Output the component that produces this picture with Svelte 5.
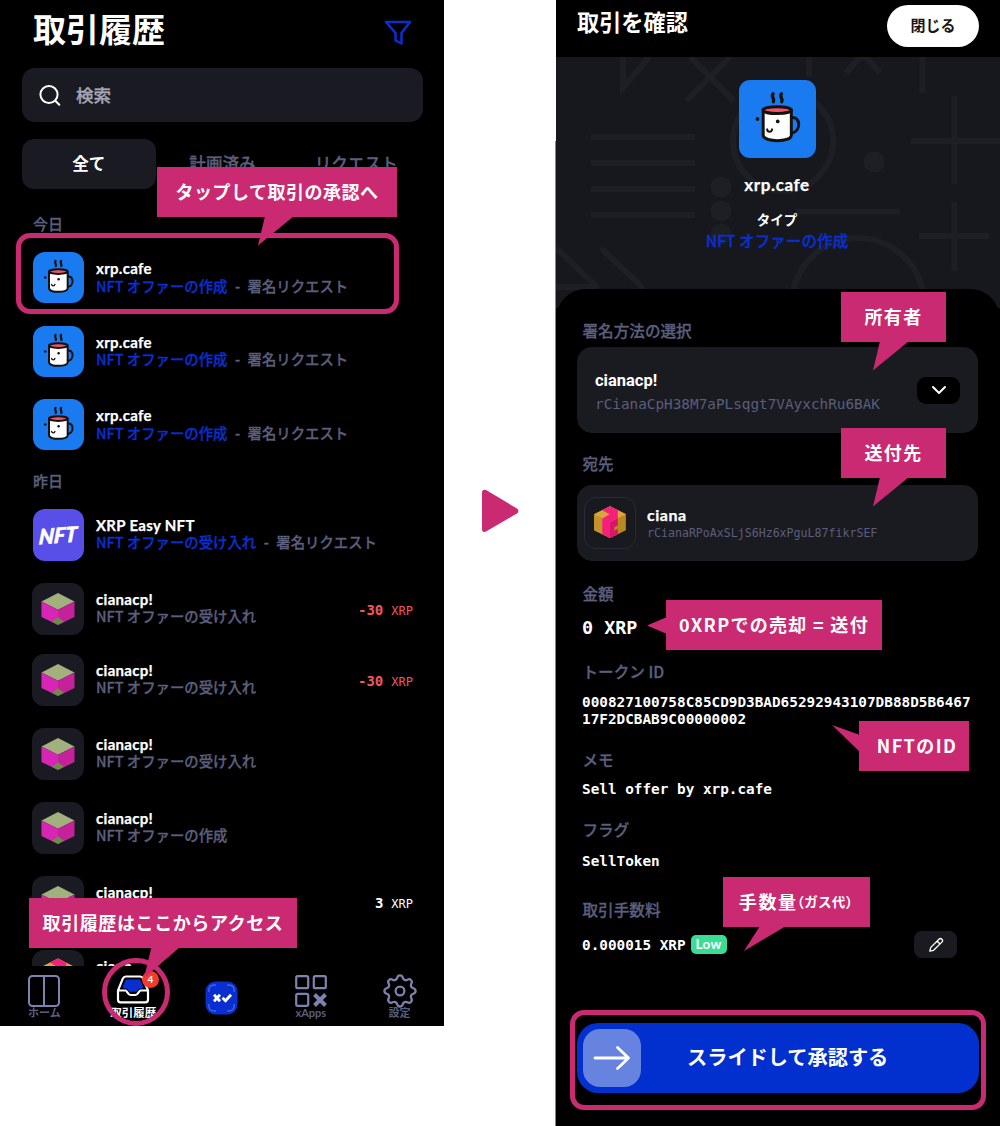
<script>
  const today = [
    { kind: 'cafe', name: 'xrp.cafe', action: 'NFT オファーの作成', request: true },
    { kind: 'cafe', name: 'xrp.cafe', action: 'NFT オファーの作成', request: true },
    { kind: 'cafe', name: 'xrp.cafe', action: 'NFT オファーの作成', request: true }
  ];
  const yesterday = [
    { kind: 'nft', name: 'XRP Easy NFT', action: 'NFT オファーの受け入れ', request: true },
    { kind: 'cube', name: 'cianacp!', action: 'NFT オファーの受け入れ', amount: '-30', tight: true },
    { kind: 'cube', name: 'cianacp!', action: 'NFT オファーの受け入れ', amount: '-30' },
    { kind: 'cube', name: 'cianacp!', action: 'NFT オファーの受け入れ' },
    { kind: 'cube', name: 'cianacp!', action: 'NFT オファーの作成' },
    { kind: 'cube', name: 'cianacp!', amount: '3' },
    { kind: 'gold', name: 'ciana' }
  ];
</script>

{#snippet mug()}
  <svg class="fill" viewBox="0 0 78 78">
    <g fill="none" stroke="#15110f" stroke-width="3" stroke-linecap="round">
      <path d="M34.500 13.500c-2.600 3 2 4.500 .3 8M43 13.500c-2.600 3 2 4.500 .3 8" stroke-width="3.400" />
      <path d="M53 37.500c9.500-1.500 10.500 14 0 16" />
      <path d="M24.500 30v26c2 6.600 27 6.600 28.500 0V30z" fill="#fff" />
      <ellipse cx="38.700" cy="30" rx="14.200" ry="3.500" fill="#f0566b" />
      <path d="M28.500 49.500c.3 3.200 4.500 3.200 5 0" stroke-width="2" />
    </g>
    <circle cx="18.700" cy="39" r="1.900" fill="#15110f" />
    <circle cx="39.200" cy="41.500" r="1.900" fill="#15110f" />
  </svg>
{/snippet}

{#snippet cube()}
  <svg class="fill" viewBox="0 0 52 52">
    <path d="M26 10 42.500 18.500 26 26.800 9.500 18.500z" fill="#a1b07c" />
    <path d="M9.500 18.500 26 26.800V42L9.500 34z" fill="#d726b5" />
    <path d="M42.500 18.500 26 26.800V42l16.500-8z" fill="#c5219a" />
    <path d="M26 34.200 32 38.700 26 42 20 38.700z" fill="#71894b" />
  </svg>
{/snippet}

{#snippet gold()}
  <svg class="fill" viewBox="0 0 52 52">
    <path d="M26 8.500 42.500 17V33.500L26 41.500 9.500 33.500V17z" fill="#b88920" />
    <path d="M9.500 17 26 25v16.500L9.500 33.500z" fill="#c6922a" />
    <path d="M26 8.500 42.500 17 26 25 9.500 17z" fill="#dba53c" />
    <path d="M26 8.500 34.200 12.700 42 17 34.500 20.800 26 25v16.500l-8-4V21.200l7.500-4.200-7.500-4.300z" fill="#f6207c" />
    <path d="M34.500 12.900 42.500 17 34.300 21l-.3-4z" fill="#dba53c" />
    <path d="M26 25 34.200 21v7.500l-3.700 2v3.300l3.700-1.600v5.400L26 41.500z" fill="#d91668" />
  </svg>
{/snippet}

{#snippet row(item)}
  <div class="row" class:tight={item.tight}>
    <div class="avatar {item.kind}">
      {#if item.kind === 'cafe'}{@render mug()}
      {:else if item.kind === 'cube'}{@render cube()}
      {:else if item.kind === 'gold'}{@render gold()}
      {:else}<span class="brush">NFT</span>{/if}
    </div>
    <div class="info">
      <div class="name">{item.name}</div>
      {#if item.action}
        <div class="sub"><span class:blue={item.request}>{item.action}</span>{#if item.request}<i>-</i><span>署名リクエスト</span>{/if}</div>
      {/if}
    </div>
    {#if item.amount}
      <div class="amount" class:red={item.amount !== '3'}><b>{item.amount}</b><span>XRP</span></div>
    {/if}
  </div>
{/snippet}

<main>
  <section class="phone history">
    <header class="head">
      <h1>取引履歴</h1>
      <svg class="funnel" viewBox="0 0 28 26"><path d="M2 2h24l-8.500 11v10.500l-6-3V13z" fill="none" stroke="#0a2fd0" stroke-width="2.500" stroke-linejoin="round" /></svg>
    </header>
    <div class="search">
      <svg viewBox="0 0 22 22"><g fill="none" stroke="#fff" stroke-width="2" stroke-linecap="round"><circle cx="10" cy="10.500" r="8.600" /><path d="m16.300 16.800 4 4" /></g></svg>
      <span>検索</span>
    </div>
    <div class="tabs">
      <div class="tab on">全て</div>
      <div class="tab">計画済み</div>
      <div class="tab">リクエスト</div>
    </div>
    <div class="list">
      <h3>今日</h3>
      <div class="group">
        {#each today as item}{@render row(item)}{/each}
      </div>
      <h3 class="second">昨日</h3>
      {#each yesterday as item}{@render row(item)}{/each}
    </div>
    <nav>
      <div class="item">
        <svg viewBox="0 0 34 34"><g fill="none" stroke="#7d83ae" stroke-width="2"><rect x="2" y="2" width="30" height="30" rx="3.500" /><path d="M17 2v30" /></g></svg>
        <span>ホーム</span>
      </div>
      <div class="item active">
        <svg viewBox="0 0 34 34">
          <path d="M10 5.500h14l3.500 7.500-2 1.800h-2.500l-2.500 3h-7l-2.500-3H8.500L6.500 13z" fill="#0a2fd0" />
          <path d="M2 16.500 6.800 4.700C7.500 3 8.200 2.500 9.800 2.500h14.400c1.600 0 2.300.5 3 2.200L32 16.500v9.300c0 1.800-.8 2.500-2.500 2.500h-25c-1.700 0-2.500-.7-2.500-2.500zh7.500c1.500 0 2.500 4.500 5 4.500h5c2.500 0 3.500-4.500 5-4.500H32" fill="none" stroke="#fff" stroke-width="2.200" stroke-linejoin="round" />
        </svg>
        <span>取引履歴</span>
      </div>
      <div class="item center">
        <svg viewBox="0 0 33 34">
          <rect x=".5" y=".5" width="32" height="33" rx="10" fill="#0a2fd0" />
          <path d="M3.800 11V9.500q0-5.500 5.500-5.500h1.500M22.200 4h1.500q5.500 0 5.500 5.500V11M29.200 23v1.500q0 5.500-5.500 5.500h-1.500M10.800 30H9.300q-5.500 0-5.500-5.500V23" fill="none" stroke="#4169e8" stroke-width="1.300" />
          <path d="m9 13.800 6 6.400M15 13.800 9 20.200M17.500 16.800l3 3 5.500-6" fill="none" stroke="#fff" stroke-width="2.800" />
        </svg>
      </div>
      <div class="item">
        <svg viewBox="0 0 34 34"><g fill="none" stroke="#7d83ae" stroke-width="2.200"><rect x="2.200" y="2.200" width="12" height="12" rx="1.500" /><rect x="19.800" y="2.200" width="12" height="12" rx="1.500" /><rect x="2.200" y="19.800" width="12" height="12" rx="1.500" /><path d="m20.500 20.500 11 11m0-11-11 11" stroke-width="4" /></g></svg>
        <span>xApps</span>
      </div>
      <div class="item">
        <svg viewBox="1.500 1.500 21 21"><g fill="none" stroke="#7d83ae" stroke-width="1.400"><circle cx="12" cy="12" r="2.700" /><path stroke-linejoin="round" d="M10.300 3.800c.5-1.900 2.900-1.900 3.400 0 .3 1.300 1.700 1.900 2.900 1.200 1.600-1 3.400.8 2.400 2.400-.7 1.200-.1 2.600 1.200 2.900 1.900.5 1.900 2.900 0 3.400-1.300.3-1.900 1.700-1.200 2.900 1 1.600-.8 3.400-2.400 2.400-1.200-.7-2.600-.1-2.900 1.200-.5 1.900-2.900 1.900-3.400 0-.3-1.300-1.700-1.900-2.900-1.200-1.600 1-3.400-.8-2.400-2.400.7-1.200.1-2.600-1.200-2.900-1.900-.5-1.900-2.900 0-3.400 1.300-.3 1.900-1.700 1.200-2.900-1-1.600.8-3.400 2.400-2.400 1.200.7 2.600.1 2.900-1.200z" /></g></svg>
        <span>設定</span>
      </div>
    </nav>

    <div class="ring row-ring"></div>
    <div class="ring tab-ring"></div>
    <div class="badge">4</div>
    <svg class="tails" viewBox="0 0 444 1040">
      <path d="M265 216h29l-36 29.500zM151.500 947h28.500l-36 31z" />
    </svg>
    <div class="callout c-approve">タップして取引の承認へ</div>
    <div class="callout c-access">取引履歴はここからアクセス</div>
  </section>

  <div class="between">
    <svg viewBox="0 0 38 44"><path d="M1 4v36q0 4 4 2.500L36 24.500q3-2.500 0-5L5 1Q1 0 1 4z" fill="#ca2a71" /></svg>
  </div>

  <section class="phone confirm">
    <header class="bar">
      <h2>取引を確認</h2>
      <button>閉じる</button>
    </header>
    <div class="hero">
      <svg class="pattern" viewBox="556 57 444 251">
        <g fill="none" stroke="#1d1f24" stroke-width="6">
          <path d="M591 137h104M591 163h104M591 189h104M591 215h104M796 211.500h104M911 141h89M954.500 96v88M919 236h70M954.500 202v69M922.500 57v36M809 57v20M623 57v31l26-31M690 57l44 44M730 57l-44 44M846 73l14-16h6l14 16M556 248l42 40M601 248l42 40M556 287h40" />
          <circle cx="783" cy="141" r="50" /><circle cx="858" cy="304" r="66" />
        </g>
        <g fill="#1d1f24"><circle cx="721" cy="187" r="10.500" /><circle cx="721" cy="211" r="10.500" /><circle cx="721" cy="234" r="10.500" /><circle cx="874" cy="162" r="10.500" /></g>
      </svg>
      <div class="logo">{@render mug()}</div>
      <div class="app">xrp.cafe</div>
      <div class="type">タイプ</div>
      <div class="kind">NFT オファーの作成</div>
    </div>
    <div class="sheet">
      <h4>署名方法の選択</h4>
      <div class="card signer">
        <div class="who">
          <strong>cianacp!</strong>
          <span>rCianaCpH38M7aPLsqgt7VAyxchRu6BAK</span>
        </div>
        <div class="drop"><svg viewBox="0 0 16 10"><path d="m2 2 6 6 6-6" fill="none" stroke="#fff" stroke-width="2" stroke-linecap="round" stroke-linejoin="round" /></svg></div>
      </div>
      <h4 class="to">宛先</h4>
      <div class="card dest">
        <div class="avatar framed">{@render gold()}</div>
        <div class="who small">
          <strong>ciana</strong>
          <span>rCianaRPoAxSLjS6Hz6xPguL87fikrSEF</span>
        </div>
      </div>
      <h4 class="sum">金額</h4>
      <p class="big">0 XRP</p>
      <h4 class="token">トークン ID</h4>
      <p class="id">000827100758C85CD9D3BAD65292943107DB88D5B6467<br />17F2DCBAB9C00000002</p>
      <h4 class="memo">メモ</h4>
      <p>Sell offer by xrp.cafe</p>
      <h4 class="flag">フラグ</h4>
      <p>SellToken</p>
      <h4 class="fee">取引手数料</h4>
      <div class="feeline">
        <p>0.000015 XRP</p><em>Low</em>
        <div class="edit"><svg viewBox="0 0 16 16"><path d="M1.800 14.200 2.800 10.400 11 2.200a2 2 0 0 1 2.900 2.900L5.600 13.300zM9.300 4.200l2.500 2.500" fill="none" stroke="#fff" stroke-width="1.300" stroke-linejoin="round" /></svg></div>
      </div>
      <div class="slide">
        <div class="knob"><svg viewBox="0 0 38 26"><path d="M2 13h33M24.500 2.500 35.500 13 24.500 23.500" fill="none" stroke="#fff" stroke-width="2.800" stroke-linecap="round" stroke-linejoin="round" /></svg></div>
        <span>スライドして承認する</span>
      </div>
    </div>

    <div class="ring slide-ring"></div>
    <svg class="tails" viewBox="556 0 444 1040">
      <path d="M880 341h29l-36 29.500zM880 477h29l-36 29.500zM667 617v17l-20-8.500zM860 735v17l-28-27zM760 926h26l-42 25z" />
    </svg>
    <div class="callout c-owner">所有者</div>
    <div class="callout c-dest">送付先</div>
    <div class="callout c-sale">0XRPでの売却 = 送付</div>
    <div class="callout c-id">NFTのID</div>
    <div class="callout c-fee">手数量<small>（ガス代）</small></div>
  </section>
</main>

<style>
  :global(body) { margin: 0; background: #fff; }
  * { box-sizing: border-box; }
  h1, h2, h3, h4, p { margin: 0; }
  svg { display: block; }
  main {
    display: flex;
    width: 1000px;
    height: 1126px;
    overflow: hidden;
    font-family: Lato, "Noto Sans CJK JP", sans-serif;
    color: #fff;
    white-space: nowrap;
  }
  .phone { position: relative; width: 444px; background: #000; flex: none; }
  .fill { width: 100%; height: 100%; }

  .history { height: 1026px; display: flex; flex-direction: column; }
  .head { display: flex; justify-content: space-between; height: 68px; padding: 4px 32px 0 33px; }
  .head h1 { font: 700 33px/48px "Noto Sans CJK JP", sans-serif; }
  .funnel { width: 28px; height: 26px; margin-top: 16px; }
  .search {
    display: flex; align-items: center; gap: 16px; flex: none;
    width: 401px; height: 54px; margin-left: 22px; padding-left: 17px;
    background: #1a1b22; border-radius: 13px;
    font: 500 17.600px "Noto Sans CJK JP", sans-serif; color: #a5a7b8;
    -webkit-text-stroke: .3px #a5a7b8;
  }
  .search svg { width: 22px; height: 22px; }
  .search span { padding-bottom: 2px; margin-left: -1px; }
  .tabs { display: flex; flex: none; width: 401px; height: 50px; margin: 17px 0 0 22px; }
  .tab { flex: 1; display: flex; align-items: center; justify-content: center; padding-bottom: 3px; font: 500 16.600px "Noto Sans CJK JP", sans-serif; color: #5b5e7c; -webkit-text-stroke: .3px #5b5e7c; }
  .tab.on { background: #1a1b22; border-radius: 12px; color: #fff; font-weight: 700; -webkit-text-stroke: 0; }

  .list { height: 777px; flex: none; overflow: hidden; }
  h3 { height: 33px; margin: 25px 0 5px 33px; font: 500 15px/20px "Noto Sans CJK JP", sans-serif; color: #5b5e7c; -webkit-text-stroke: .3px #5b5e7c; }
  h3.second { height: 33px; margin: -2px 0 5px 33px; }
  .row { display: flex; height: 74px; padding: 0 31px 0 32px; }
  .group .row { height: 73.500px; }
  .row.tight { height: 71px; }
  .avatar { width: 52px; height: 52px; border-radius: 12px; background: #1a1b22; flex: none; }
  .avatar.cafe { background: #1a7af0; width: 51px; height: 51px; margin-left: 1px; }
  .avatar.nft { background: #584fe8; display: flex; align-items: center; justify-content: center; width: 51px; margin-left: 1px; }
  .brush { font: italic 900 21px Lato, sans-serif; transform: rotate(-4deg) skewX(-8deg); -webkit-text-stroke: .6px #fff; }
  .info { margin-left: 12px; padding-top: 8px; }
  .name { font: 700 15px/17px Lato, sans-serif; letter-spacing: .3px; -webkit-text-stroke: .25px #fff; }
  .sub { display: flex; font: 500 14.400px/17px "Noto Sans CJK JP", sans-serif; color: #5b5e7c; -webkit-text-stroke: .3px; margin-top: -.5px; }
  .sub i { width: 20px; text-align: center; font-style: normal; }
  .blue { color: #0a2fd0; }
  .amount { margin-left: auto; padding-top: 18px; display: flex; align-items: baseline; gap: 8px; font: 12px/18px "DejaVu Sans Mono", monospace; }
  .amount b { font-size: 14px; }
  .red { color: #f5545c; }

  nav { display: flex; flex: none; height: 60px; padding: 8px 0 0; background: #000; }
  .item { width: 89px; display: flex; flex-direction: column; align-items: center; font: 700 11px/12px Lato, "Noto Sans CJK JP", sans-serif; color: #5b5e7c; }
  .item svg { width: 34px; height: 34px; }
  .item span { margin-top: -1px; }
  .item.active { color: #fff; font-size: 11.500px; }
  .item.center svg { width: 33px; height: 34px; margin-top: 7px; }

  .ring { position: absolute; border: 5px solid #ca2a71; }
  .row-ring { left: 16px; top: 233px; width: 383px; height: 81px; border-radius: 14px; }
  .tab-ring { left: 102px; top: 958px; width: 68px; height: 68px; border-radius: 50%; }
  .slide-ring { left: 14px; top: 1010px; width: 416px; height: 100px; border-radius: 14px; }
  .badge { position: absolute; left: 142px; top: 971px; width: 17px; height: 17px; border-radius: 50%; background: #f43b2b; font: 700 10px/17px Lato, sans-serif; text-align: center; }
  .tails { position: absolute; left: 0; top: 0; width: 444px; height: 1040px; fill: #ca2a71; }
  .callout {
    position: absolute; display: flex; align-items: center; justify-content: center; height: 50px; padding-bottom: 3px;
    background: #ca2a71; font: 700 18px "Noto Sans CJK JP", sans-serif;
  }
  .c-approve { left: 157px; top: 167px; width: 240px; letter-spacing: .5px; }
  .c-access { left: 29px; top: 898px; width: 268px; letter-spacing: .6px; }
  .c-owner { left: 285px; top: 292px; width: 105px; letter-spacing: 1.400px; }
  .c-dest { left: 285px; top: 428px; width: 105px; letter-spacing: 1.400px; }
  .c-sale { left: 110px; top: 600px; width: 216px; letter-spacing: 1.300px; }
  .c-id { left: 303px; top: 721px; width: 110px; padding-left: 6px; letter-spacing: 1.400px; }
  .c-fee { left: 167px; top: 877px; width: 147px; letter-spacing: 1.600px; }
  .c-fee small { font-size: 13.500px; letter-spacing: .2px; margin: 0 -5px 0 -7px; }

  .between { width: 112px; padding: 489px 0 0 37px; }
  .between svg { width: 38px; height: 44px; }

  .confirm { height: 1126px; display: flex; flex-direction: column; }
  .confirm::before { content: ""; position: absolute; left: -1px; top: 141px; bottom: 0; width: 1px; background: #858585; }
  .bar { display: flex; justify-content: space-between; height: 57px; padding: 5px 21px 0 21px; }
  .bar h2 { font: 700 22.200px/32px "Noto Sans CJK JP", sans-serif; }
  button { width: 92px; height: 42px; padding: 0 0 3px; border: 0; border-radius: 21px; background: #fff; color: #15161b; font: 700 15px "Noto Sans CJK JP", sans-serif; }
  .hero { position: relative; height: 251px; display: flex; flex-direction: column; align-items: center; background: #17181d; padding: 23px 2px 0 0; flex: none; }
  .pattern { position: absolute; inset: 0; width: 444px; height: 251px; }
  .hero > div { position: relative; }
  .logo { width: 77px; height: 78px; border-radius: 11px; background: #1a7af0; flex: none; }
  .app { font: 700 17px/20px Lato, sans-serif; letter-spacing: .6px; -webkit-text-stroke: .25px #fff; margin-top: 17px; }
  .type { font: 700 13.500px/18px "Noto Sans CJK JP", sans-serif; margin-top: 15px; }
  .kind { font: 500 15.600px/22px "Noto Sans CJK JP", sans-serif; color: #0a2fd0; -webkit-text-stroke: .3px #0a2fd0; margin-top: 1px; }
  .sheet { position: relative; margin-top: -19px; padding: 31px 22px 0 21px; height: 837px; border-radius: 30px 30px 0 0; background: #000; flex: none; }
  h4 { height: 21px; margin-left: 5.500px; font: 500 15.600px/20px "Noto Sans CJK JP", sans-serif; color: #5b5e7c; -webkit-text-stroke: .3px #5b5e7c; }
  .card { display: flex; align-items: center; background: #1a1b20; border-radius: 15px; }
  .signer { margin-top: 6px; height: 86px; padding: 0 18px; justify-content: space-between; }
  .who { display: flex; flex-direction: column; }
  .signer .who { padding-top: 6px; }
  .who strong { font: 700 16.500px/22px Roboto, sans-serif; }
  .who span { font: 14.350px/24px "DejaVu Sans Mono", monospace; color: #5b5e7c; }
  .small { margin-left: 11px; padding-top: 2px; }
  .who.small strong { font: 700 16px/18px Lato, sans-serif; letter-spacing: .5px; -webkit-text-stroke: .25px #fff; }
  .who.small span { font-size: 11.600px; line-height: 18px; }
  .drop { width: 43px; height: 27px; border-radius: 9px; background: #000; display: flex; align-items: center; justify-content: center; }
  .drop svg { width: 16px; height: 10px; }
  .to { margin-top: 20px; }
  .dest { margin-top: 11px; height: 76px; padding-left: 7px; }
  .framed { border: 1px solid #292a33; background: #191a20; }
  .sum { margin-top: 22px; }
  p { margin-left: 5px; font: 700 14.350px/18px "DejaVu Sans Mono", monospace; }
  p.big { font-size: 18.400px; line-height: 26px; margin-top: 11px; }
  .token { margin-top: 20px; }
  .id { margin-top: 11.500px; line-height: 17.500px; }
  .memo { margin-top: 20.500px; }
  .memo + p { margin-top: 10px; }
  .flag { margin-top: 21px; }
  .flag + p { margin-top: 12px; }
  .fee { margin-top: 29px; }
  .feeline { display: flex; align-items: center; margin-top: 11px; height: 27px; padding-right: 21px; }
  em { margin-left: 5px; width: 36px; height: 19px; border-radius: 5px; background: #3bdc96; text-align: center; font: 700 13.500px/19px Lato, sans-serif; letter-spacing: .3px; }
  .edit { margin-left: auto; width: 43px; height: 27px; border-radius: 8px; background: #1a1b20; display: flex; align-items: center; justify-content: center; }
  .edit svg { width: 16px; height: 16px; }
  .slide { display: flex; align-items: center; margin-top: 65px; height: 70px; width: 402px; padding-left: 6px; border-radius: 21px; background: #0230cf; font: 700 20.200px "Noto Sans CJK JP", sans-serif; }
  .knob { width: 58px; height: 58px; border-radius: 17px; background: #6783e0; display: flex; align-items: center; justify-content: center; }
  .knob svg { width: 38px; height: 26px; }
  .slide span { margin-left: 46px; padding-bottom: 4px; }
</style>
